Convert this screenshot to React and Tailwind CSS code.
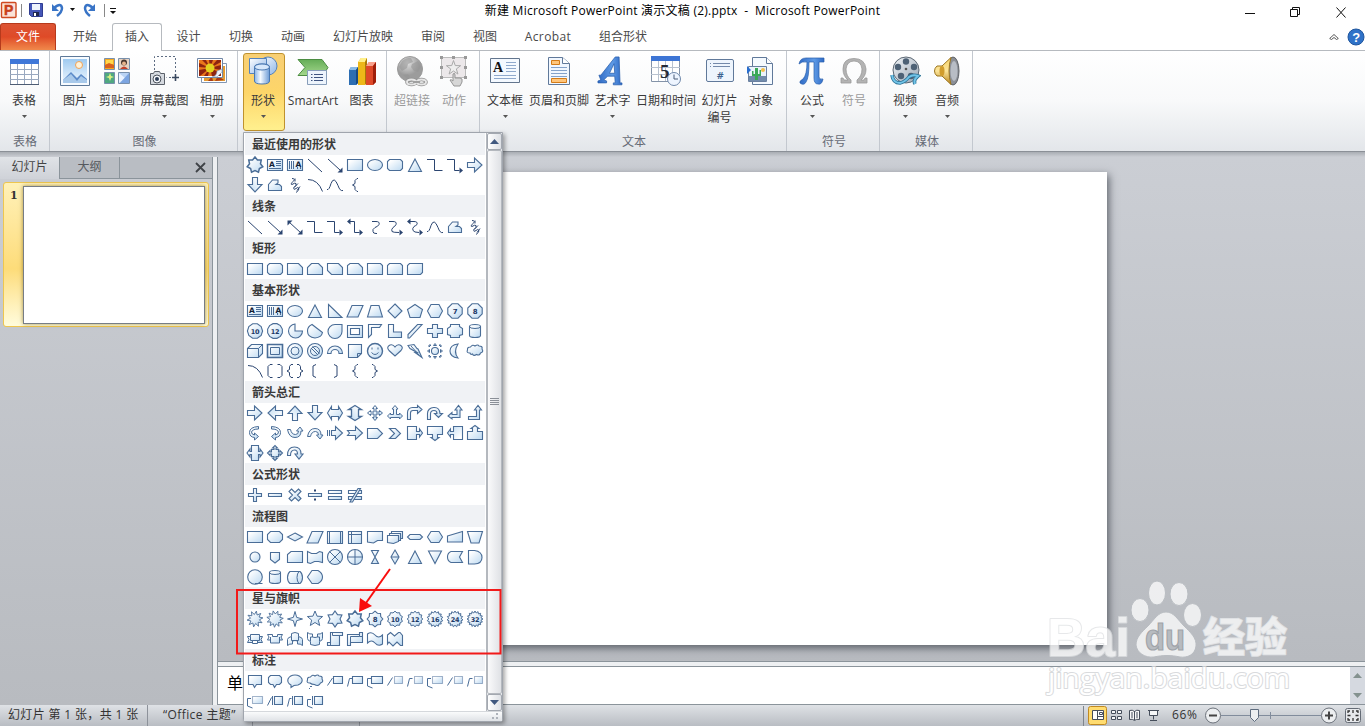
import React from 'react';

const INK = '#4a6d97';

const star = (n, R, r, rot = -90, cx = 10, cy = 10) => {
  const pts = [];
  for (let i = 0; i < n * 2; i++) {
    const a = ((rot + (i * 180) / n) * Math.PI) / 180;
    const k = i % 2 ? r : R;
    pts.push(`${(cx + k * Math.cos(a)).toFixed(2)} ${(cy + k * Math.sin(a)).toFixed(2)}`);
  }
  return `M${pts.join('L')}z`;
};

const poly = (n, R, rot) => star(n / 2, R, R, rot);
const circle = (r, cx = 10, cy = 10) => `M${cx - r} ${cy}a${r} ${r} 0 1 0 ${2 * r} 0a${r} ${r} 0 1 0 ${-2 * r} 0z`;

const ARROW = 'M2.500 7.500h7v-4.500l7.500 7-7.500 7v-4.500h-7z';
const UTURN = 'M2.500 16.500v-6a6 6 0 0 1 6-6h1q5 0 5.500 6h2.500l-4 4-4-4h2.500q0-3-3-3-3.500 0-3.500 3.500v5.500z';
const BENT = 'M2.500 16.500v-7a5 5 0 0 1 5-5h5v-2l4.500 4-4.500 4v-3h-4.500q-2.500 0-2.500 2.500v6.500z';
const BENTUP = 'M3.500 13.500h8v-6.500h-2l3.500-4.500 3.500 4.500h-2v9.500h-11z';
const CURVED = 'M13.500 3.500Q4.500 4 4.500 9.500q0 4.500 5 5v2.500l4-3.500-4-3.500v2q-3-.5-3-3 1-3 7-3z';

/* f: filled outline, l: line only, s: solid, t: caption, r: rotation, w: stroke width, m: mirror, d: dotted */
const S = {
  star7: { f: star(7, 8, 5.6), w: 1.5 },
  textH: { f: 'M2.500 4.500h15v11h-15z', l: 'M11 6.500h5M11 8.500h5M11 10.500h5M4 13.500h12', a: [4, 11.5] },
  textV: { f: 'M2.500 4.500h15v11h-15z', l: 'M4.500 6v8M6.500 6v8M8.500 6v8M12.500 12v2M15.500 12v2', a: [10.500, 11.5] },
  line: { l: 'M3 4L17 17' },
  arrowLine: { l: 'M3 4L15 15', s: 'M17.500 17.500h-5l5-5z' },
  dblLine: { l: 'M4 5L16 16', s: 'M17.500 17.500h-5l5-5zM2.500 3.500h5l-5 5z' },
  rect: { f: 'M2.500 4.500h15v11h-15z' },
  ellipse: { f: 'M2.500 10a7.500 5.500 0 1 0 15 0a7.500 5.500 0 1 0-15 0z' },
  round: { f: 'M4.500 4.500h11l2 2v7l-2 2h-11l-2-2v-7z' },
  tri: { f: 'M10 4L16.500 16.500H3.500z' },
  elbow: { l: 'M2 4.500h7.500v11h8' },
  elbowA: { l: 'M2 4.500h7.500v11h5', s: 'M14.500 12.500l3.500 3-3.500 3z' },
  elbowD: { l: 'M5 4.500h4.500v11h5', s: 'M14.500 12.500l3.500 3-3.500 3zM5.500 1.500l-3.500 3 3.500 3z' },
  curveC: { l: 'M7 4.500h4q4 0 3 3q-1 2-4 3q-3 2-2 4q0 2 3 2h1' },
  curveA: { l: 'M4 4.500h4q4 0 3 3q-1 2-3 3q-2 2-1 4q1 1 7 1', s: 'M14.500 12.500l3.500 3-3.500 3z' },
  curveD: { l: 'M5 4.500h4q4 0 3 3q-1 1-3 2q-2 2-1 4q1 2 6 2', s: 'M14.500 12.500l3.500 3-3.500 3zM5.500 1.500l-3.500 3 3.500 3z' },
  right: { f: ARROW },
  left: { f: ARROW, r: 180 },
  up: { f: ARROW, r: -90 },
  down: { f: ARROW, r: 90 },
  free: { f: 'M3.500 9.500l4-4.500h5.500v3l-2 1.500h3.500l2 2v4h-13z' },
  scrib: { l: 'M7 3.500q4 0 1 3-3 3-1 3 3-2 4-1 1 2-2 4-1 3 2 1 2-2 3 0 0 2-3 4M10 3.500v3M13 8.500l-4 4M15 11.500l-3 4' },
  arc: { l: 'M3 4.500q10 0 14.500 12' },
  curve: { l: 'M2 14.500q2 1 4-6q3-8 7 2q2 6 5 5' },
  braceL: { l: 'M13 3.500h-1l-2 2v3l-2.500 1.500 2.500 1.500v3l2 2h1' },
  braceR: { l: 'M7 3.500h1l2 2v3l2.500 1.500-2.500 1.500v3l-2 2h-1' },
  snip1: { f: 'M2.500 4.500h11l4 4v7h-15z' },
  snip2: { f: 'M6.500 4.500h7l4 4v7h-15v-7z' },
  snipD: { f: 'M2.500 4.500h11l4 4v7h-11l-4-4z' },
  snipR: { f: 'M5 4.500h8.500l4 4v7h-15v-9z' },
  rd1: { f: 'M2.500 4.500h13l2 2v9h-15z' },
  rd2: { f: 'M4.500 4.500h11l2 2v9h-15v-9z' },
  rdD: { f: 'M4.500 4.500h13v9l-2 2h-13v-9z' },
  rtri: { f: 'M3.500 3.500L17 16.500H3.500z' },
  para: { f: 'M7 4.500h11l-5 11.500h-11z' },
  trap: { f: 'M6 4.500h8l3.500 11.500h-15z' },
  diamond: { f: 'M10 3l7 7-7 7-7-7z' },
  penta: { f: 'M10 3.500l7.500 5-2.500 8h-10l-2.500-8z' },
  hexa: { f: 'M6 3.500h8l3.500 6.500-3.500 6.500h-8L2.500 10z' },
  p7: { f: poly(8, 7.8, 22.5), t: '7' },
  p8: { f: poly(8, 7.8, 22.5), t: '8' },
  p10: { f: poly(10, 7.6, 0), t: '10' },
  p12: { f: poly(12, 7.6, 15), t: '12' },
  pie: { f: 'M10 3a7 7 0 1 0 7.500 7H10z' },
  chord: { f: 'M7 3.500q-4.500 2-4.500 6.500 0 6.500 7.500 7 6.500-.5 7.500-5.500z' },
  tear: { f: 'M17 3.500h-7a7 7 0 1 0 7 7z' },
  frame: { f: 'M2.500 4.500h15v12h-15zM5.500 7.500h9v6h-9z' },
  half: { f: 'M3.500 3.500h13l-2 3h-8v7l-3 3z' },
  lshape: { f: 'M3.500 3.500h5v7.500h8v5.500h-13z' },
  stripe: { f: 'M12.500 3.500h4.500L4.500 17H3v-3.500z' },
  plus: { f: 'M7.500 3.500h5v4h5v5h-5v4h-5v-4h-5v-5h5z' },
  plaque: { f: 'M5.500 3.500h9v2l3 2v6l-3 1v2h-9v-2l-3-1v-6l3-2z' },
  can: { f: 'M4.500 5.500q0-2 5.500-2t5.500 2v9q0 2-5.500 2t-5.500-2z', l: 'M4.500 5.500q0 2 5.500 2t5.500-2' },
  cube: { f: 'M2.500 7.500l4-4h11v9l-4 4h-11z', l: 'M2.500 7.500h11v9M13.500 7.500l4-4' },
  bevel: { f: 'M2.500 3.500h15v13h-15z', l: 'M5.500 6.500h9v7h-9z', w: 1.6 },
  donut: { f: circle(7.5), l: circle(4) },
  no: { f: circle(7.5), l: `${circle(4.5)}M6 7l7 7M7.500 5.500l7 7` },
  block: { f: 'M2.500 12.500a7.500 7.500 0 0 1 15 0h-3.500a4 4 0 0 0-8 0z' },
  fold: { f: 'M3.500 3.500h13v9l-4 4h-9z', l: 'M12.500 16v-3.500h4' },
  smile: { f: circle(7.5), l: 'M6.500 11.500q3.500 4 7 0M7 6.500v2M13 6.500v2', w: 1.4 },
  heart: { f: 'M10 6q2-3 5-2 4 2 1 5.500L10 15 4 9.500Q1 6 5 4q3-1 5 2z' },
  bolt: { f: 'M3 4.500l6-1 3 4 1 .5 4 8.500-7-5h2L5 7.500z', l: 'M6 5l8 9' },
  sun: { f: circle(3.5), l: 'M8.500 4.500l1.500-2 1.500 2zM8.500 15.500l1.500 2 1.500-2zM4.500 8.500l-2 1.500 2 1.500zM15.500 8.500l2 1.500-2 1.500zM4 4h2L4 6zM14 4h2v2zM4 14v2h2zM16 14v2h-2z' },
  moon: { f: 'M13 3q-8 1-8 7t8 7q-5-6 0-14z' },
  cloud: { f: 'M5 12q-4 0-2.500-3-.5-3 3-3 2-3 4.500-1 3-2 4 0 4 0 3 3 2 3-1.500 4-1 3-4 1.500-3 2-4-.5-2 1-2.500-1z' },
  brackets: { l: 'M7.500 3.500H5l-2 2v9l2 2h2.500M12.500 3.500H15l2 2v9l-2 2h-2.500' },
  braces: { l: 'M8 3.500H6l-1.500 2v3L2 10l2.500 1.500v3L6 16.500h2M12 3.500h2l1.500 2v3L18 10l-2.500 1.500v3l-1.500 2h-2' },
  brkL: { l: 'M11 3.500L8 5v10l3 1.500' },
  brkR: { l: 'M9 3.500L12 5v10l-3 1.500' },
  lr: { f: 'M2.500 10L6.500 3.500v3h7v-3l4 6.500-4 6.500v-3h-7v3z' },
  ud: { f: 'M2.500 10L6.500 3.500v3h7v-3l4 6.500-4 6.500v-3h-7v3z', r: 90, w: 1.3 },
  quad: { f: 'M10 2.500l2.500 3h-1.500V9h3.500V7.500l3 2.500-3 2.500V11H11v3.500h1.500l-2.500 3-2.500-3H9V11H5.500v1.500L2.500 10l3-2.500V9H9V5.500H7.500z', w: 1 },
  tri3: { f: 'M10 2.500l3 3.500h-1.500v5.500h3V10l3 3-3 3v-1.500h-9V16l-3-3 3-3v1.500h3V6H7z', w: 1 },
  bent: { f: BENT },
  uturn: { f: UTURN },
  leftup: { f: 'M12 11.500V7h-2l3.500-4.500L17 7h-2v7.500H7V16l-4-3 4-3.500v2z' },
  bentup: { f: BENTUP },
  curR: { f: CURVED, w: 1 },
  curL: { f: CURVED, m: 1, w: 1 },
  curU: { f: 'M2.500 6.500h3q1 5 5 5 3 0 3-3.500h-2l3.500-4 3 4h-2q0 6.500-6 6.500-6 0-7.500-8z', w: 1 },
  curDn: { f: 'M2.500 13.500h3q1-5 5-5 3 0 3 3.500h-2l3.500 4 3-4h-2q0-6.500-6-6.500-6 0-7.500 8z', w: 1 },
  striped: { f: 'M6.500 7.500h4v-4l7 6.500-7 6.500v-4h-4z', l: 'M2.500 7v6M4.500 7v6' },
  notched: { f: 'M2.500 7.500h8v-4l7 6.500-7 6.500v-4h-8l2-2.500z' },
  pentA: { f: 'M2.500 5.500h10l5 5-5 5h-10z' },
  chev: { f: 'M4.500 5.500h6l5 5-5 5h-6l5-5z' },
  callR: { f: 'M2.500 3.500h9v5h3V6l3 4-3 4v-2.500h-3v5h-9z' },
  callD: { f: 'M2.500 3.500h15v8h-5v3H14l-4 3-4-3h1.500v-3h-5z' },
  callL: { f: 'M2.500 3.500h9v5h3V6l3 4-3 4v-2.500h-3v5h-9z', r: 180 },
  callU: { f: 'M2.500 16.500h15v-8h-5v-3H14l-4-3-4 3h1.500v3h-5z' },
  callLR: { f: 'M6.500 2.500h7v6h1.500V6l3 4-3 4v-2.500h-1.500v6h-7v-6H5V14l-3-4 3-4v2.500h1.500z' },
  callQ: { f: 'M6.500 6.500H9V5H7.500L10 2.500 12.500 5H11v1.500h2.500V9H15V7.500l2.500 2.500-2.500 2.500V11h-1.500v2.500H11V15h1.500L10 17.500 7.500 15H9v-1.500H6.500V11H5v1.500L2.500 10 5 7.500V9h1.500z' },
  circA: { f: 'M2.500 12.500q0-8.500 7-8.500 6.500 0 6.500 7h2l-4 5-4-5h2.500q0-4-3-4-4 0-4 5.500z' },
  mplus: { f: 'M8.500 3.500h3v5h5v3h-5v5h-3v-5h-5v-3h5z' },
  minus: { f: 'M3.500 8.500h13v3h-13z' },
  mult: { f: 'M6.500 4L10 7.500 13.500 4 16 6.500 12.500 10l3.500 3.500-2.500 2.500-3.500-3.500L6.500 16 4 13.500 7.500 10 4 6.500z' },
  div: { f: 'M3.500 8.500h13v3h-13z', s: 'M9 4.500h2v2H9zM9 13.500h2v2H9z' },
  equal: { f: 'M3.500 5.500h13v3h-13zM3.500 11.500h13v3h-13z' },
  neq: { f: 'M3.500 5.500h13v3h-13zM3.500 11.500h13v3h-13z', f2: 'M13 3.500h2.500L7.500 17H5z' },
  term: { f: 'M5.500 4.500h9l3 3v5l-3 3h-9l-3-3v-5z' },
  decis: { f: 'M10 6l7.500 4-7.500 4-7.500-4z' },
  predef: { f: 'M2.500 4.500h15v12h-15z', l: 'M4.500 4.500v12M15.500 4.500v12' },
  intern: { f: 'M3.500 4.500h13v12h-13z', l: 'M6.500 4.500v12M3.500 7.500h13' },
  doc: { f: 'M2.500 4.500h15v9h-5l-4 2.500-6-1z' },
  multi: { f: 'M6.500 4.500h11v7h-11z', f2: 'M4.500 6.500h11v7h-11z', f3: 'M2.500 8.500h11v6l-5 2-6-1z' },
  pill: { f: 'M5 7.500h10l2.500 2.500-2.500 2.500H5L2.500 10z' },
  prep: { f: 'M6 4.500h8l3.500 5.500-3.500 5.500H6L2.500 10z' },
  disp: { f: 'M7 3.500h6q4.500 2.500 4.500 6.500t-4.500 6.500H7L2.500 10z' },
  manual: { f: 'M2.500 9l15-4.500v10.500h-15z' },
  manop: { f: 'M2.500 4.500h15L14 16H6z' },
  conn: { f: circle(5) },
  offpage: { f: 'M5.500 5.500h9v7l-4.500 3.500-4.500-3.500z' },
  card: { f: 'M6 4.500h11.500v11h-15v-8z' },
  tape: { f: 'M2.500 4.500l4 2h5l3-2 3 1v10l-4-1h-4l-4 2-3-1z' },
  sumj: { f: circle(7.5), l: 'M4.700 4.700l10.600 10.600M15.300 4.700L4.700 15.300' },
  orj: { f: circle(7.5), l: 'M2.500 10h15M10 2.500v15' },
  coll: { f: 'M6.500 3.500h7l-3.500 6.500 3.500 6.500h-7L10 10z' },
  sort: { f: 'M10 3l4 7-4 7-4-7z', l: 'M6 10h8' },
  invtri: { f: 'M3.500 4h13L10 16.500z' },
  stored: { f: 'M6 4.500h11.500l-3 5.500 3 5.500H6Q2.500 14 2.500 10T6 4.500z' },
  delay: { f: 'M3.500 3.500h6q7.500 1 7.500 7t-7.500 6.500h-6z' },
  seq: { f: circle(7.3), l: 'M10 16.500h7.500' },
  das: { f: 'M5 4.500h10q2.500 2 2.500 6t-2.500 6H5q-2.500-2-2.500-6t2.500-6z', l: 'M14 4.500q-2 2-2 6t2 6' },
  ex1: { f: star(10, 8, 4.5, -80), w: 0.9 },
  ex2: { f: star(11, 8.3, 5, -70), w: 0.9 },
  s4: { f: star(4, 7.5, 2.3), w: 1 },
  s5: { f: star(5, 8, 3.5), w: 1 },
  s6: { f: star(6, 8, 5) },
  s8: { f: star(8, 7.8, 6.2), t: '8' },
  s10: { f: star(10, 7.8, 6.4), t: '10', w: 1 },
  s12: { f: star(12, 7.9, 6.2), t: '12', w: 1 },
  s16: { f: star(14, 8, 6.2), t: '16', w: 1 },
  s24: { f: star(15, 8, 6.2), t: '24', w: 1 },
  s32: { f: star(16, 8, 6.1), t: '32', w: 1 },
  rib1: { f: 'M5.500 5.500h9v2h3L16 10.500l1.500 3h-5v-2h-5v2h-5l1.500-3-1.500-3h3z', l: 'M5.500 7.500v4h2v3h5v-3h2v-4', w: 1 },
  rib2: { f: 'M2.500 5.500h5v2h5v-2h5L16 8l1.500 3h-3v3h-9v-3h-3L4 8z', l: 'M5.500 8v3M14.500 8v3', w: 1 },
  rib3: { f: 'M6.500 4.500q3.500-2 7 0v3q4 1 4 3v6q-2-2-5-1.500v-3q-2.500-1-5 0v3q-3-.5-5 1.500v-6q0-2 4-3z', l: 'M6.500 7.500v4h7v-4', w: 1 },
  rib4: { f: 'M2.500 3.500q2 2 5 1.500v3q2.500 1 5 0V5q3 .5 5-1.500v6q0 2-3 3v3q-4.500 2-9 0v-3q-3-1-3-3z', l: 'M5.500 12V8h2M14.500 12V8h-2', w: 1 },
  scrV: { f: 'M5.500 3.500h12v3h-3v10h-12v-3h3z', l: 'M7.500 3.500v3h7M5.500 13.500v3' },
  scrH: { f: 'M2.500 5.500h12v-2h3v10h-12v3h-3z', l: 'M14.500 5.500v2h-9v6M14.500 7.500h3' },
  wave: { f: 'M2.500 5q4-3 7.500 1t7.500 0v9q-4 3-7.500-1t-7.500 0z' },
  dwave: { f: 'M2.500 6l3-2.500 4 3.500 4-3.500h1.500l2.500 3v10h-2L12 13l-4 4-4-4-1.500 2z' },
  cRect: { f: 'M3.500 4.500h13v9h-5l-2 3-1.500-3h-4.500z' },
  cRound: { f: 'M5.500 4.500h9l2 2v5l-2 2h-3l-2 3-1.500-3h-2.500l-2-2v-5z' },
  cOval: { f: 'M6 14q-4-2-3-6 2-4 7-4t7 4q1 4-4 6l-4 .5-3 2z' },
  cCloud: { f: 'M5 12q-4 0-2.500-3-.5-3 3-3 2-3 4.500-1 3-2 4 0 4 0 3 3 2 3-1.500 4-2 4-6 1.500-3 0-4.500-1.500z', l: 'M5 15.500h2M4 17.500h1' },
  l1: { f: 'M8.500 5.500h9v7h-9z', l: 'M2.500 14.500l5-7.500' },
  l2: { f: 'M7.500 5.500h10v7h-10z', l: 'M2.500 15.500l2-8h3' },
  l3: { f: 'M6.500 5.500h11v7h-11z', l: 'M6 7.500H2.500v7.500l5 2' },
  d1: { f: 'M9.500 5.500h8v7h-8z', l: 'M2.500 14.500l5-8', d: 1 },
  d2: { f: 'M9.500 5.500h8v7h-8z', l: 'M2.500 15.500l2-8h3', d: 1 },
  d3: { f: 'M7.500 5.500h10v7h-10z', l: 'M6 7.500H2.500v7.500l5 2', d: 1 },
  a1: { f: 'M9.500 5.500h8v8h-8z', l: 'M2.500 14.500l4-8M7.500 5v9' },
  a2: { f: 'M9.500 5.500h8v8h-8z', l: 'M2.500 15.500l2-8h2M7.500 5v9' },
  a3: { f: 'M9.500 5.500h8v8h-8z', l: 'M6 8.500H2.500v6.500l5 2M7.500 5v9' },
};

const SECTIONS = [
  ['最近使用的形状', ['star7 textH textV line arrowLine rect ellipse round tri elbow elbowA right', 'down free scrib arc curve braceL']],
  ['线条', ['line arrowLine dblLine elbow elbowA elbowD curveC curveA curveD curve free scrib']],
  ['矩形', ['rect round snip1 snip2 snipD snipR rd1 rd2 rdD']],
  ['基本形状', ['textH textV ellipse tri rtri para trap diamond penta hexa p7 p8', 'p10 p12 pie chord tear frame half lshape stripe plus plaque can', 'cube bevel donut no block fold smile heart bolt sun moon cloud', 'arc brackets braces brkL brkR braceL braceR']],
  ['箭头总汇', ['right left up down lr ud quad tri3 bent uturn leftup bentup', 'curR curL curU curDn striped notched pentA chev callR callD callL callU', 'callLR callQ circA']],
  ['公式形状', ['mplus minus mult div equal neq']],
  ['流程图', ['rect term decis para predef intern doc multi pill prep manual manop', 'conn offpage card tape sumj orj coll sort tri invtri stored delay', 'seq can das disp']],
  ['星与旗帜', ['ex1 ex2 s4 s5 s6 star7 s8 s10 s12 s16 s24 s32', 'rib1 rib2 rib3 rib4 scrV scrH wave dwave']],
  ['标注', ['cRect cRound cOval cCloud l1 l2 l3 d1 d2 d3 d1 d2', 'd3 a1 a2 a3']],
];

function Shape({ name }) {
  const s = S[name];
  const tf = s.m ? 'translate(20 0) scale(-1 1)' : s.r ? `rotate(${s.r} 10 10)` : undefined;
  return (
    <svg width="20" height="20" viewBox="0 0 20 20" className="block shrink-0" fill="none" stroke={INK} strokeWidth={s.w || 1.1}>
      <g transform={tf}>
        {s.f && <path d={s.f} fill="url(#shapeFill)" fillRule="evenodd" strokeDasharray={s.d ? '1 1' : undefined} />}
        {s.f2 && <path d={s.f2} fill="url(#shapeFill)" />}
        {s.f3 && <path d={s.f3} fill="url(#shapeFill)" />}
        {s.l && <path d={s.l} stroke={s.f ? INK : '#2b4570'} strokeWidth={1} />}
        {s.s && <path d={s.s} fill="#2b4570" stroke="none" />}
      </g>
      {s.t && <text x="10" y="12.500" textAnchor="middle" fontFamily="DejaVu Sans, sans-serif" fontWeight="700" fontSize={s.t.length > 1 ? 6.5 : 7} letterSpacing="-0.3" fill="#1d3a68" stroke="none">{s.t}</text>}
      {s.a && <text x={s.a[0]} y={s.a[1]} fontFamily="DejaVu Sans, sans-serif" fontWeight="700" fontSize="7.500" fill="#111d33" stroke="none">A</text>}
    </svg>
  );
}

const ICONS = {
  table: (
    <>
      <path d="M2.500 3.500h28v25h-28z" fill="#fff" stroke="#8b99ad" />
      <path d="M2 3h29v5H2z" fill="#3f77d8" />
      <path d="M2 13.500h29M2 18.500h29M2 23.500h29M9.500 8v20M16.500 8v20M23.500 8v20" stroke="#9aa9c0" />
      <path d="M2 28.500h29" stroke="#4d5c73" />
    </>
  ),
  picture: (
    <>
      <path d="M1.500.5h29v29h-29z" fill="#f7fbff" stroke="#5d7898" />
      <path d="M4 3h24v24H4z" fill="url(#sky)" />
      <circle cx="20" cy="9" r="3.500" fill="#fff2d8" stroke="#f1a255" />
      <path d="M4 24l8-8 6 6 4-4 6 5v4H4z" fill="#5c8bc9" />
      <path d="M4 24l8-6 6 7 4-5 6 4v3H4z" fill="#bcd8f2" opacity=".8" />
    </>
  ),
  clip: (
    <>
      <path d="M3.500 2.500h10v11h-10z" fill="#f6a720" stroke="#7890ac" /><path d="M5 4h7v4H5z" fill="#ffd84c" /><path d="M4 9l4-2 5 2v3H4z" fill="#d9611e" />
      <path d="M17.500 2.500h11v11h-11z" fill="#e7d3c3" stroke="#7890ac" /><circle cx="23" cy="6.500" r="3" fill="#49372f" /><circle cx="23" cy="7.500" r="2" fill="#e8b58d" /><path d="M19 13q4-5 8 0z" fill="#c23f28" />
      <path d="M3.500 16.500h10v11h-10z" fill="#4fa881" stroke="#7890ac" /><path d="M9 17l1.200 3 2.800 1-2.800 1L9 25l-1.200-3L5 21l2.800-1z" fill="#d7f083" />
      <path d="M17.500 16.500h11v11h-11z" fill="#b9d3f4" stroke="#7890ac" /><path d="M18 17l6 5-6 5z" fill="#eaf3ff" /><path d="M28 17v10h-9z" fill="#7ba4e0" />
    </>
  ),
  screenshot: (
    <>
      <path d="M5.500 14V.5h21v21h-9" fill="none" stroke="#5e6d83" strokeDasharray="2 2" />
      <path d="M1.500 17.500h3l1-2h5l1 2h4v11h-14z" fill="#d5d9df" stroke="#5a6069" />
      <circle cx="8" cy="23" r="4" fill="#f5f7fa" stroke="#4c525b" /><circle cx="8" cy="23" r="2" fill="#2e3d55" />
      <path d="M26.500 18v7M23 21.500h7" stroke="#39485f" strokeWidth="1.600" />
    </>
  ),
  album: (
    <>
      <path d="M5.500 7.500h25v19h-25z" fill="#fff" stroke="#8397b2" /><path d="M8 10h21v15H8z" fill="#e49b32" /><path d="M12 25l4-5 1 5M19 25l3-5 6 4" fill="#a83a16" />
      <path d="M1.500 2.500h25v19h-25z" fill="#fff" stroke="#7087a6" /><path d="M3 4h22v16H3z" fill="#8e2410" />
      <path d="M14 12L3 7V4h3zM14 12L10 4h3zM14 12l3-8h4zM14 12l11-6v3zM14 12L3 11v3zM14 12L4 20h4zM14 12l-2 8h4zM14 12l11 2v3z" fill="#ea771b" /><circle cx="14" cy="12" r="4.500" fill="#e3d21f" />
      <path d="M16 21q5-1 5-6l5-2v3l-5 5z" fill="#eef2f8" stroke="#8397b2" strokeWidth=".6" />
    </>
  ),
  shapes: (
    <>
      <circle cx="21" cy="10" r="9" fill="url(#blueG)" stroke="#5583bd" />
      <path d="M2.500 2.500h17v15h-17z" fill="url(#blueG)" stroke="#5583bd" />
      <path d="M7.500 11q0-3 7.500-3t7.500 3v14q0 3-7.500 3t-7.500-3z" fill="url(#cyl)" stroke="#4a78b2" />
      <ellipse cx="15" cy="11" rx="7.500" ry="3" fill="#d7e8fb" stroke="#4a78b2" />
    </>
  ),
  smart: (
    <>
      <path d="M1 3.500h24l6 8-5 8H1l7-8z" fill="url(#green)" stroke="#4c8d42" />
      <path d="M10.500 14.500h19v14h-19z" fill="#edf4fc" stroke="#879db9" />
      <path d="M17 18.500h9M17 21.500h9M17 24.500h9M14 18.500h1.500M14 21.500h1.500M14 24.500h1.500" stroke="#3f5480" />
    </>
  ),
  chart: (
    <>
      <path d="M3 14l2-3h7v16l-2 2H3z" fill="#2d6eb3" /><path d="M3 14l2-3h7l-2 3z" fill="#88b9e5" /><path d="M10 14l2-3v16l-2 2z" fill="#194a84" />
      <path d="M12 6l3-4h6v24l-2 3h-7z" fill="#edb718" /><path d="M12 6l3-4h6l-2 4z" fill="#fff08a" /><path d="M19 6l2-4v24l-2 3z" fill="#aa7906" />
      <path d="M20 10l3-4h7v20l-3 3h-7z" fill="#de4828" /><path d="M20 10l3-4h7l-3 4z" fill="#f9a18c" /><path d="M27 10l3-4v20l-3 3z" fill="#9f1e0a" />
    </>
  ),
  link: (
    <>
      <circle cx="14" cy="13" r="12.500" fill="url(#grayG)" stroke="#9a9a9a" />
      <path d="M6 5q5-4 9-3l2 4-5 2-1 4-5 3-3-4zM16 8l6-3 3 6-3 5-4-1-3-4zM7 19l5-1 2 3-2 3z" fill="#969696" opacity=".6" />
      <g fill="none" stroke="#8f8f8f" strokeWidth="3.600"><ellipse cx="15.500" cy="26" rx="4.500" ry="2.500" /><ellipse cx="25.500" cy="26" rx="4.500" ry="2.500" /></g>
      <g fill="none" stroke="#e6e6e6" strokeWidth="2"><ellipse cx="15.500" cy="26" rx="4.500" ry="2.500" /><ellipse cx="25.500" cy="26" rx="4.500" ry="2.500" /></g>
      <path d="M17 26h7" stroke="#a0a0a0" strokeWidth="2" />
    </>
  ),
  action: (
    <>
      <path d="M3.500 1.500h24v20h-24z" fill="#ece8ea" stroke="#bbb" />
      <path d={star(5, 7.5, 3, -90, 15.5, 12)} fill="#eee" stroke="#aaa" />
      <path d="M2 0h3v3H2zM14 0h3v3h-3zM26 0h3v3h-3zM2 10h3v3H2zM26 10h3v3h-3zM2 20h3v3H2zM26 20h3v3h-3z" fill="#999" />
      <path d="M15 18q2-2 2 1v3h5q3 0 2 4l-2 4h-6l-4-6q1-1 3 1z" fill="#d6d6d6" stroke="#969696" />
    </>
  ),
  textbox: (
    <>
      <path d="M1.500 2.500h29v24h-29z" fill="#f4f9ff" stroke="#62758d" />
      <path d="M17 6.500h10M17 9.500h10M17 12.500h10M17 15.500h10M5 19.500h22M5 22.500h22" stroke="#8fa9cd" />
      <text x="4" y="16" fontFamily="Liberation Serif, serif" fontWeight="700" fontSize="14" fill="#111">A</text>
    </>
  ),
  header: (
    <>
      <path d="M5.500 1.500h14l7 6v21h-21z" fill="#f1f7ff" stroke="#60799a" /><path d="M19.500 1.500v6h7" fill="#fff" stroke="#60799a" />
      <path d="M8.500 4.500h8v4h-8zM8.500 22.500h15v4h-15z" fill="#ffc57b" stroke="#d37b18" />
      <path d="M8 11.500h16M8 14.500h16M8 17.500h16M8 20.500h16" stroke="#84a2ca" />
    </>
  ),
  wordart: <path d="M2 20h2L19 1h4l1 27h2v2h-9v-2h2l-.5-7H11l-4 4 3 1v2H1v-2l3-1zm11-2h5.500l-.8-10z" fill="url(#deep)" stroke="#285eac" strokeWidth=".8" transform="scale(.96)" />,
  date: (
    <>
      <path d="M1.500 1.500h28v24h-28z" fill="#fff" stroke="#8493a8" /><path d="M1 0h29v5H1z" fill="#3d75d5" />
      <path d="M1 11.500h29M1 18.500h29M8.500 5v20M15.500 5v20M22.500 5v20" stroke="#b8c2cf" />
      <text x="10" y="22" fontFamily="Liberation Serif, serif" fontWeight="700" fontSize="19" fill="#252b36">5</text>
      <circle cx="24" cy="23" r="6.500" fill="#eef5ff" stroke="#7089ab" /><path d="M24 18.500V23h4" fill="none" stroke="#485a76" />
    </>
  ),
  slideno: (
    <>
      <rect x="2.500" y="3.500" width="27" height="22" rx="1.500" fill="#eef5fd" stroke="#60799a" />
      <path d="M9 7.500h17M9 10.500h17M6 7.500h1M6 10.500h1" stroke="#7389aa" />
      <text x="12.500" y="22.500" fontFamily="DejaVu Sans, sans-serif" fontWeight="700" fontSize="9" fill="#3c6390">#</text>
    </>
  ),
  object: (
    <>
      <path d="M7.500 1.500h14l6 6v21h-20z" fill="#f5faff" stroke="#60799a" /><path d="M21.500 1.500v6h6" fill="#fff" stroke="#60799a" />
      <path d="M3.500 10.500h18v15h-18z" fill="#eaf3fc" stroke="#6a80a0" /><path d="M4 20h17v5H4z" fill="#718bab" />
      <circle cx="18" cy="14" r="2" fill="#f4bf4a" /><path d="M10 12h3v12h-3zM7 15h1.500v3h6v-4H16v6H7z" fill="#39a857" /><path d="M2 10l4 4-4 4z" fill="#286ed0" />
    </>
  ),
  pi: <path d="M3 8q1-6 7-6h18v4h-5v15q0 3 4 2-1 6-5 5-4 0-4-6V6h-5q0 16-3 20-2 4-6 1-1-2 3-4Q11 19 11 6 6 5 3 8z" fill="url(#deep)" stroke="#285eac" strokeWidth=".7" />,
  omega: <path d="M3 22v5h10v-3Q8 20 8 13q1-8 8-8t8 8q0 7-5 11v3h10v-5h-2l-1 2h-3q5-4 5-11Q27 2.500 16 2.500T5 13q0 7 5 11H6l-1-2z" fill="#b3b3b3" stroke="#999" strokeWidth=".8" />,
  video: (
    <>
      <circle cx="17" cy="14" r="13" fill="url(#grayL)" stroke="#5c6874" />
      <g fill="#4d6175"><circle cx="17" cy="5.500" r="3.200" /><circle cx="9" cy="11" r="3.200" /><circle cx="12" cy="20" r="3.200" /><circle cx="22" cy="20" r="3.200" /><circle cx="25" cy="11" r="3.200" /></g><circle cx="17" cy="13" r="1.300" fill="#555" />
      <path d="M3 19q1 8 8 8 5-1 9-6 4-3 9-1-5 4-3 8" fill="none" stroke="#2c7397" strokeWidth="3.600" /><path d="M3 19q1 8 8 8 5-1 9-6 4-3 9-1-5 4-3 8" fill="none" stroke="#72c4e8" strokeWidth="2" />
    </>
  ),
  audio: (
    <>
      <ellipse cx="22" cy="15" rx="6" ry="14" fill="#8b8f96" stroke="#5e6268" />
      <ellipse cx="23" cy="15" rx="3.500" ry="10" fill="#b8bdc5" />
      <path d="M6 10q-2.500 2-2.500 5t2.500 5h5l9 8.500Q16 15 20 1.500L11 10z" fill="url(#gold)" stroke="#9b741e" /><ellipse cx="11" cy="15" rx="2.500" ry="5" fill="#d19c2c" />
    </>
  ),
};

function Caret({ className = '' }) {
  return <svg width="5" height="3" viewBox="0 0 5 3" className={className}><path d="M0 0h5L2.500 3z" fill="#555" /></svg>;
}

const GROUPS = [
  ['表格', 'w-[50px] pl-[3px]', [['table', ['表格'], 'w-[42px]', 1]]],
  ['图像', 'w-[188px] pl-1', [['picture', ['图片'], 'w-[42px]'], ['clip', ['剪贴画'], 'w-[42px]'], ['screenshot', ['屏幕截图'], 'w-[53px]', 1], ['album', ['相册'], 'w-[42px]', 1]]],
  ['', 'w-[149px] pl-[5px]', [['shapes', ['形状'], 'w-[42px]', 1], ['smart', ['SmartArt'], 'w-[56px]'], ['chart', ['图表'], 'w-[41px]']]],
  ['', 'w-[93px] pl-1', [['link', ['超链接'], 'w-[42px]'], ['action', ['动作'], 'w-[42px]']]],
  ['文本', 'w-[307px] pl-1', [['textbox', ['文本框'], 'w-[42px]', 1], ['header', ['页眉和页脚'], 'w-[66px]'], ['wordart', ['艺术字'], 'w-[41px]', 1], ['date', ['日期和时间'], 'w-[66px]'], ['slideno', ['幻灯片', '编号'], 'w-[41px]'], ['object', ['对象'], 'w-[42px]']]],
  ['符号', 'w-[93px] pl-1', [['pi', ['公式'], 'w-[42px]', 1], ['omega', ['符号'], 'w-[42px]']]],
  ['媒体', 'w-[93px] pl-1', [['video', ['视频'], 'w-[42px]', 1], ['audio', ['音频'], 'w-[42px]', 1]]],
];

const OFF = ['link', 'action', 'omega'];

function Ribbon() {
  return (
    <div className="flex h-[101px] shrink-0 border-b border-[#8b9097] bg-linear-to-b from-white via-[#f8f9fa] to-[#e3e6ea]">
      {GROUPS.map(([label, cls, items], i) => (
        <div key={i} className={`flex shrink-0 flex-col border-r border-[#c3c8cf] pt-[2px] ${cls}`}>
          <div className="flex h-[78px]">
            {items.map(([icon, lines, w, caret]) => (
              <div key={icon} className={`flex shrink-0 flex-col items-center rounded-[3px] border pt-[2px] ${w} ${icon === 'shapes' ? 'border-[#bf922e] bg-linear-to-b from-[#f8cf74] via-[#fdd569] to-[#fff08e] pr-[2px]' : 'border-transparent'}`}>
                <svg width="32" height="32" viewBox="0 0 32 32" className="shrink-0">{ICONS[icon]}</svg>
                <div className={`mt-1 text-center leading-[17px] whitespace-nowrap ${OFF.includes(icon) ? 'text-[#9b9b9b]' : 'text-[#3a3a3a]'}`}>
                  {lines.map((l) => <div key={l}>{l}</div>)}
                </div>
                {caret && <Caret className="mt-[6px]" />}
              </div>
            ))}
          </div>
          <div className="h-5 pr-[2px] text-center leading-[22px] text-[#676b76]">{label}</div>
        </div>
      ))}
    </div>
  );
}

const TABS = [['开始', 'w-[54px] ml-[2px]'], ['插入', 'w-[50px]'], ['设计', 'w-[53px]'], ['切换', 'w-[52px]'], ['动画', 'w-[52px]'], ['幻灯片放映', 'w-[88px]'], ['审阅', 'w-[52px]'], ['视图', 'w-[52px]'], ['Acrobat', 'w-[74px] tracking-[0.4px]'], ['组合形状', 'w-[76px]']];

function TitleBar() {
  return (
    <div className="flex h-[23px] shrink-0 items-center">
      <svg width="120" height="22" viewBox="0 0 120 22" className="shrink-0">
        <rect x="1.500" y="1.500" width="14.500" height="15" rx="1" fill="#fbe3d8" stroke="#cf4a21" strokeWidth="1.400" />
        <text x="4" y="14" fontFamily="Liberation Sans, sans-serif" fontWeight="700" fontSize="14" fill="#c8401b" stroke="#c8401b" strokeWidth=".5">P</text>
        <path d="M21.500 3v13" stroke="#888" />
        <path d="M29.500 2.500h13v13h-11l-2-2z" fill="#4556b8" stroke="#303d91" /><path d="M32 3h8v6h-8z" fill="#eef3fc" /><path d="M33 11h6v4h-6z" fill="#1f2750" /><path d="M34 12h2v3h-2z" fill="#fff" />
        <path d="M54 7q7-6 8 0 0 4-5 8" fill="none" stroke="#3974c6" strokeWidth="2.500" /><path d="M52 3v7h7z" fill="#3974c6" />
        <path d="M70 7h5l-2.500 3z" fill="#111" />
        <path d="M93 7q-7-6-8 0 0 4 5 8" fill="none" stroke="#3974c6" strokeWidth="2.500" /><path d="M95 3v7h-7z" fill="#3974c6" />
        <path d="M104.500 3v13" stroke="#888" /><path d="M110 7.500h6" stroke="#111" /><path d="M110 10h6l-3 3z" fill="#111" />
      </svg>
      <div className="h-[23px] flex-1 text-center leading-[21px] tracking-[0.23px] whitespace-pre text-black">新建 Microsoft PowerPoint 演示文稿 (2).pptx  -  Microsoft PowerPoint</div>
      <svg width="120" height="22" viewBox="0 0 120 22" className="shrink-0" fill="none" stroke="#111">
        <path d="M0 12.500h10M45.500 8.500h7v7h-7zM47.500 8.500v-2h7v7h-2M91.500 6.500l9 10M100.500 6.500l-9 10" />
      </svg>
    </div>
  );
}

function TabBar() {
  return (
    <div className="flex h-7 shrink-0 border-b border-[#b6babf]">
      <div className="h-[27px] w-14 rounded-t-[3px] border border-b-0 border-[#b63a1c] bg-linear-to-b from-[#dc5434] via-[#df4a27] to-[#f0884b] text-center leading-[26px] text-white">文件</div>
      {TABS.map(([t, w]) => (
        <div key={t} className={`shrink-0 text-center leading-[26px] text-[#4a4a4a] ${w} ${t === '插入' ? 'h-7 rounded-t-[3px] border border-b-0 border-[#b6babf] bg-white' : 'pt-px'}`}>{t}</div>
      ))}
      <div className="flex flex-1 items-center justify-end gap-2">
        <svg width="10" height="8" viewBox="0 0 10 8" fill="#fff" stroke="#555"><path d="M.700 5.500L5 1.500l4.300 4-1.800 1L5 4.500l-2.500 2z" /></svg>
        <svg width="18" height="18" viewBox="0 0 18 18"><circle cx="9" cy="9" r="8" fill="#2f72c8" stroke="#1f559d" /><text x="5.200" y="13.500" fontFamily="Liberation Sans, sans-serif" fontWeight="700" fontSize="13" fill="#fff">?</text></svg>
      </div>
    </div>
  );
}

function SlidePane() {
  return (
    <div className="flex w-[213px] shrink-0 flex-col border-r border-[#8b949b] bg-linear-to-b from-[#cbced4] to-[#b8bbc0]">
      <div className="flex h-[22px] text-[#55585e]">
        <div className="w-[59px] bg-linear-to-b from-[#e0e3e7] to-[#cfd2d8] text-center leading-[20px] text-[#444]">幻灯片</div>
        <div className="w-[61px] border-x border-b border-[#8b949b] bg-[#b9bdc3] text-center leading-[20px]">大纲</div>
        <div className="flex flex-1 items-center justify-end border-b border-[#8b949b] bg-[#b9bdc3] pr-[6px]">
          <svg width="11" height="11" viewBox="0 0 11 11"><path d="M1 1l9 9M10 1l-9 9" stroke="#3f4347" strokeWidth="1.800" /></svg>
        </div>
      </div>
      <div className="mt-[3px] ml-[3px] flex h-[145px] w-[206px] rounded-[3px] border border-[#efc64f] bg-linear-to-b from-[#fff1b8] via-[#fddc79] via-60% to-[#fffcdc]">
        <div className="w-[19px] pt-[5px] pl-[6px] font-[DejaVu_Serif,serif] text-[11px] leading-[16px] font-bold text-[#333]">1</div>
        <div className="mt-[3px] h-[138px] w-[182px] border border-[#777d85] bg-white shadow-[0_0_4px_rgba(100,80,0,0.6)]" />
      </div>
    </div>
  );
}

function ScrollArrow({ up }) {
  return (
    <div className="flex h-[17px] w-[15px] items-center justify-center rounded-[2px] border border-[#a3a8b0] bg-linear-to-r from-white to-[#dde0e5]">
      <svg width="9" height="5" viewBox="0 0 9 5"><path d={up ? 'M0 5h9L4.500 0z' : 'M0 0h9L4.500 5z'} fill="#40587f" /></svg>
    </div>
  );
}

function ShapesMenu() {
  return (
    <div className="absolute top-[132px] left-[243px] flex h-[590px] w-[260px] flex-col rounded-b-[3px] border border-[#a0a5ad] bg-white shadow-[2px_2px_4px_rgba(0,0,0,0.35)]">
      <div className="flex h-[578px]">
        <div className="w-[242px] pl-px">
          {SECTIONS.map(([title, rows]) => (
            <div key={title}>
              <div className="h-[22px] w-[240px] bg-[#f0f2f5] pl-[7px] leading-[24px] font-bold text-[#3a3a3a]">{title}</div>
              {rows.map((row, i) => (
                <div key={i} className="flex h-5">
                  {row.split(' ').map((n, k) => <Shape key={k} name={n} />)}
                </div>
              ))}
            </div>
          ))}
        </div>
        <div className="flex w-4 flex-col items-center border-l border-[#b4b8be] bg-[#eceef0]">
          <ScrollArrow up />
          <div className="flex w-[15px] flex-1 flex-col items-center justify-center gap-px rounded-[2px] border border-[#b4b8be] bg-linear-to-r from-[#fafafb] to-[#dfe1e5]">
            <svg width="9" height="9" viewBox="0 0 9 9" className="-mt-[42px]"><path d="M0 1.500h9M0 3.500h9M0 5.500h9M0 7.500h9" stroke="#8a8f97" /></svg>
          </div>
          <ScrollArrow />
        </div>
      </div>
      <div className="flex flex-1 items-end justify-end border-t border-[#d5d8dc] bg-linear-to-b from-[#fafbfc] to-[#dfe2e6] pr-[3px] pb-[2px]">
        <svg width="7" height="6" viewBox="0 0 7 6"><path d="M0 4h2v2H0zM4 4h2v2H4zM4 0h2v2H4z" fill="#adb2ba" /></svg>
      </div>
    </div>
  );
}

function Workspace() {
  return (
    <div className="flex min-w-0 flex-1 flex-col border-l border-[#8b949b]">
      <div className="flex h-[505px] justify-center border-b border-[#8b949b] bg-linear-to-b from-[#cbced4] to-[#b8bbc0] pt-[15px]">
        <div className="h-[473px] w-[631px] bg-white shadow-[2px_3px_8px_rgba(60,65,75,0.75)]" />
      </div>
      <div className="h-[4px] bg-[#eef0f2]" />
      <div className="flex flex-1 border-y border-[#8b949b] bg-white">
        <div className="flex-1 pt-[5px] pl-[9px] font-['Noto_Sans_CJK_SC',sans-serif] text-[16px] leading-5 text-black">单</div>
        <div className="flex w-[15px] flex-col items-center justify-between bg-[#d5d9e0] py-1.5">
          <svg width="9" height="5" viewBox="0 0 9 5"><path d="M0 5h9L4.500 0z" fill="#84928f" /></svg>
          <svg width="9" height="5" viewBox="0 0 9 5"><path d="M0 0h9L4.500 5z" fill="#84928f" /></svg>
        </div>
      </div>
    </div>
  );
}

function StatusBar() {
  return (
    <div className="flex h-[21px] shrink-0 bg-linear-to-b from-[#dfe2e6] to-[#b9bdc3] leading-[20px] text-[#333]">
      <div className="w-[148px] border-r border-[#8d929a] pl-2 tracking-[0.35px] whitespace-nowrap">幻灯片 第 1 张，共 1 张</div>
      <div className="w-[105px] border-r border-[#8d929a] pl-[15px] tracking-[0.4px] whitespace-nowrap">“Office 主题”</div>
      <div className="w-[107px] border-r border-[#8d929a]" />
      <div className="flex-1" />
      <svg width="282" height="21" viewBox="0 0 282 21" fill="none">
        <path d="M.5 1v20" stroke="#80858c" />
        <rect x="5.500" y="1.500" width="18" height="18" rx="2" fill="#ffdc70" stroke="#c18a22" />
        <g stroke="#454d5a">
          <path d="M9.500 5.500h11v9h-11zM14.500 5.500v9M15 11.500h5M16.500 7.500h3v2h-3z" fill="#fff" />
          <path d="M28.500 5.500h4v3h-4zM34.500 5.500h4v3h-4zM28.500 11.500h4v3h-4zM34.500 11.500h4v3h-4z" fill="#f6f7f8" />
          <path d="M46.500 5.500q3-1 5 1 2-2 5-1v9q-3-1-5 1-2-2-5-1zM51.500 6v9M48 8h2M48 10h2M48 12h2M53 8h2M53 10h2M53 12h2" fill="#f6f7f8" />
          <path d="M65 5.500h11M66.500 5.500v5h8v-5M70.500 10.500v4M67 15.500h7" fill="#f6f7f8" />
        </g>
        <text x="89" y="14" fontSize="12" textLength="25" fill="#333">66%</text>
        <path d="M138 10.500h100M187.500 7v7" stroke="#818c9c" />
        <circle cx="130" cy="10.500" r="7.500" fill="#eceef0" stroke="#6c727b" /><path d="M126 10.500h8" stroke="#444" strokeWidth="2" />
        <circle cx="246" cy="10.500" r="7.500" fill="#eceef0" stroke="#6c727b" /><path d="M242 10.500h8M246 6.500v8" stroke="#444" strokeWidth="2" />
        <path d="M167.500 4.500h8v8l-4 4-4-4z" fill="#eceef0" stroke="#5e6c7e" />
        <rect x="262.500" y="3.500" width="15" height="14" rx="2" fill="#e7e9ec" stroke="#646b75" />
        <path d="M270 5v3M270 13v3M264.500 10.500h3M272.500 10.500h3M265 8V6h2M273 6h2v2M265 13v2h2M273 15h2v-2" stroke="#333" strokeWidth="1.300" />
      </svg>
    </div>
  );
}

function Watermark() {
  return (
    <svg width="260" height="130" viewBox="1040 570 260 130" className="absolute top-[570px] left-[1040px]" fill="#fff">
      <g opacity=".75">
        <text x="1047" y="656" fontFamily="Liberation Sans, sans-serif" fontWeight="700" fontSize="54" textLength="83" lengthAdjust="spacingAndGlyphs" stroke="#dfe1e3" strokeWidth="2" strokeLinejoin="round" paintOrder="stroke">Bai</text>
        <text x="1203" y="652" fontFamily="Noto Sans CJK SC, sans-serif" fontWeight="700" fontSize="41" textLength="84" lengthAdjust="spacingAndGlyphs" stroke="#eceef0" strokeWidth="2" strokeLinejoin="round" paintOrder="stroke">经验</text>
        <g stroke="#b9bdc2" strokeWidth="1">
          <ellipse cx="1140" cy="610" rx="9" ry="11.500" /><ellipse cx="1157" cy="593" rx="8.500" ry="12" />
          <ellipse cx="1179" cy="594" rx="9" ry="11.500" /><ellipse cx="1192.500" cy="615" rx="9" ry="11.500" />
          <path d="M1166 612c8 0 12 8 18 14s13 12 12 20c-1 9-9 12-16 11-9-2-17-2-26 0-9 1-17-4-18-12 0-8 6-13 12-19s10-14 18-14z" />
        </g>
        <text x="1145" y="650" fontFamily="Liberation Sans, sans-serif" fontWeight="700" fontSize="36" textLength="40" lengthAdjust="spacingAndGlyphs" fill="#b7bbc0" stroke="#979ba1" strokeWidth="1.200">du</text>
      </g>
      <text x="1048" y="688" fontFamily="Open Sans, sans-serif" fontSize="27" textLength="242" lengthAdjust="spacingAndGlyphs" stroke="#d3d5d8" strokeWidth="2" strokeLinejoin="round" paintOrder="stroke" opacity=".85">jingyan.baidu.com</text>
    </svg>
  );
}

export default function App() {
  return (
    <div className="relative flex h-[726px] w-[1365px] flex-col overflow-hidden bg-white font-['Open_Sans','Noto_Sans_CJK_SC',sans-serif] text-[12px]">
      <svg width="0" height="0" className="absolute">
        <defs>
          <linearGradient id="shapeFill" x1="0" y1="0" x2="1" y2="1"><stop offset=".15" stopColor="#fff" /><stop offset="1" stopColor="#bcd9f1" /></linearGradient>
          <linearGradient id="sky" x1="0" y1="0" x2="0" y2="1"><stop stopColor="#9fcaf0" /><stop offset="1" stopColor="#eef7ff" /></linearGradient>
          <linearGradient id="blueG" x1="0" y1="0" x2="1" y2="1"><stop stopColor="#fff" /><stop offset="1" stopColor="#8db5e6" /></linearGradient>
          <linearGradient id="cyl"><stop stopColor="#8ab4e6" /><stop offset=".4" stopColor="#f5faff" /><stop offset="1" stopColor="#6c9bd6" /></linearGradient>
          <linearGradient id="green" x1="0" y1="0" x2="0" y2="1"><stop stopColor="#65ad57" /><stop offset="1" stopColor="#a4d78d" /></linearGradient>
          <linearGradient id="deep"><stop stopColor="#2e69c4" /><stop offset=".6" stopColor="#5f9be6" /><stop offset="1" stopColor="#2e69c4" /></linearGradient>
          <linearGradient id="gold" x1="0" y1="0" x2="0" y2="1"><stop stopColor="#f8d36a" /><stop offset=".5" stopColor="#fbe49a" /><stop offset="1" stopColor="#bb861b" /></linearGradient>
          <radialGradient id="grayG" cx=".4" cy=".25"><stop stopColor="#e2e2e2" /><stop offset="1" stopColor="#9c9c9c" /></radialGradient>
          <linearGradient id="grayL" x1="0" y1="0" x2="1" y2="1"><stop stopColor="#f2f5f8" /><stop offset="1" stopColor="#9aa7b4" /></linearGradient>
        </defs>
      </svg>
      <TitleBar />
      <TabBar />
      <Ribbon />
      <div className="h-[5px] shrink-0 bg-linear-to-b from-[#a9adb3] to-[#cbced4]" />
      <div className="flex min-h-0 flex-1">
        <SlidePane />
        <div className="w-1 bg-[#eef0f2]" />
        <Workspace />
      </div>
      <StatusBar />
      <ShapesMenu />
      <Watermark />
      <svg width="270" height="90" viewBox="234 567 270 90" className="absolute top-[567px] left-[234px]">
        <path d="M237 590h263.500v63.500H237z" fill="none" stroke="#f21a1a" strokeWidth="2" />
        <path d="M390 569L366 603" stroke="#f90d0d" strokeWidth="2" /><path d="M359 612l1-14 12 8z" fill="#f90d0d" />
      </svg>
    </div>
  );
}
